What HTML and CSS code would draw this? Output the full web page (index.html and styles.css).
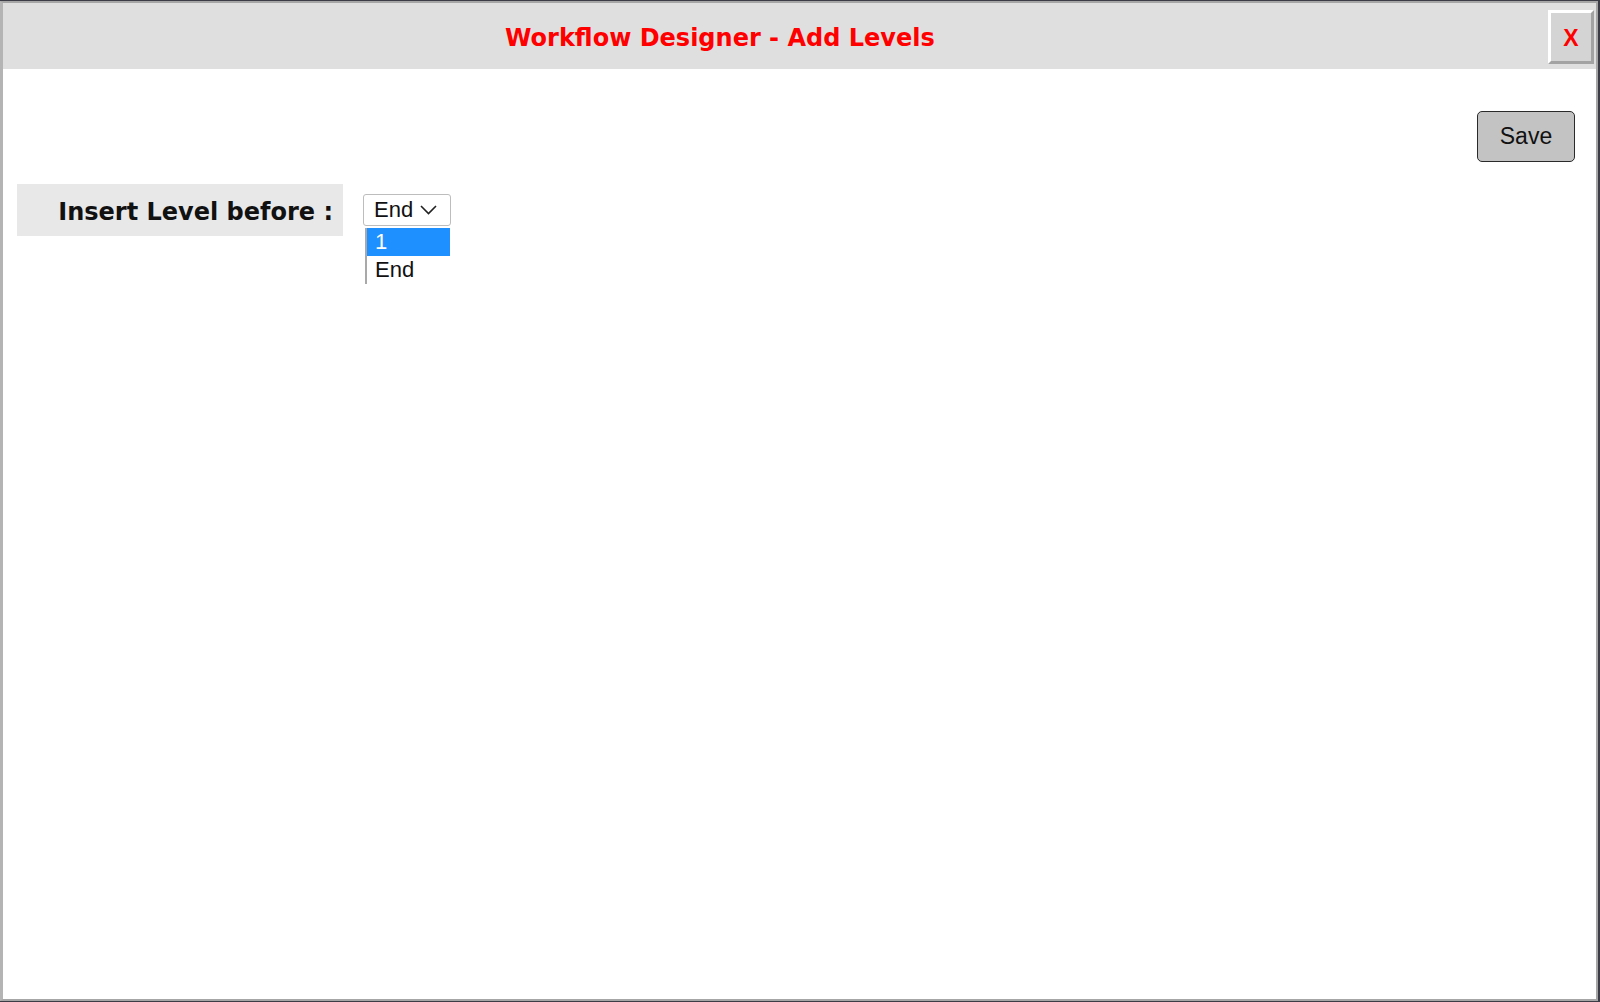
FILE: index.html
```html
<!DOCTYPE html>
<html lang="en">
<head>
  <meta charset="UTF-8" />
  <title>Workflow Designer - Add Levels</title>
  <link rel="stylesheet" href="styles.css">
</head>
<body>

<div class="dialog">
  <div class="dialog-header">
    <div class="dialog-title">Workflow Designer - Add Levels</div>
    <button class="close-btn" type="button">X</button>
  </div>

  <div class="dialog-body">
    <div class="toolbar">
      <button class="save-btn" type="button">Save</button>
    </div>

    <div class="form-row">
      <div class="form-label">Insert Level before :</div>
      <div class="select-wrap">
        <div class="select-box">
          <span>End</span>
          <svg class="chevron" width="17" height="10" viewBox="0 0 17 10">
            <polyline points="1,1 8.5,8.5 16,1" fill="none" stroke="#222" stroke-width="1.6" />
          </svg>
        </div>
        <div class="select-list">
          <div class="select-option selected">1</div>
          <div class="select-option">End</div>
        </div>
      </div>
    </div>
  </div>
</div>

</body>
</html>
```

FILE: styles.css
```css
body {
  margin: 0;
  padding: 0;
  background-color: #3c3c46;
  font-family: "Liberation Sans", Arial, sans-serif;
  color: #111;
}

.dialog {
  box-sizing: border-box;
  width: 1598px;
  height: 1000px;
  margin-top: 1px;
  background: white;
  border: 2px solid #a6a6a6;
  border-left: 3px solid #b4b4b4;
}

.dialog-header {
  display: flex;
  align-items: center;
  height: 66px;
  background-color: #dfdfdf;
}

.dialog-title {
  width: 90%;
  padding-top: 4px;
  text-align: center;
  font-family: "DejaVu Sans", Verdana, sans-serif;
  font-weight: bold;
  font-size: 24px;
  color: #ff0000;
}

.close-btn {
  box-sizing: border-box;
  align-self: flex-start;
  margin: 7px 2px 0 auto;
  width: 46px;
  height: 54px;
  padding: 2px 0 0;
  background-color: #d4d4d4;
  border: 3px solid;
  border-color: #ffffff #a3a3a3 #a3a3a3 #ffffff;
  font-family: "Liberation Sans", Arial, sans-serif;
  font-weight: bold;
  font-size: 23px;
  color: #ff0000;
}

.dialog-body {
  padding: 42px 21px 0 14px;
}

.toolbar {
  display: flex;
  justify-content: flex-end;
}

.save-btn {
  box-sizing: border-box;
  width: 98px;
  height: 51px;
  background-color: #c3c3c3;
  border: 1px solid #2a2a2a;
  border-radius: 5px;
  font-family: "Liberation Sans", Arial, sans-serif;
  font-size: 23px;
  color: #111;
}

.form-row {
  display: flex;
  align-items: flex-start;
  margin-top: 22px;
}

.form-label {
  box-sizing: border-box;
  width: 326px;
  height: 52px;
  line-height: 48px;
  padding: 4px 10px 0 0;
  text-align: right;
  background-color: #e8e8e8;
  font-family: "DejaVu Sans", Verdana, sans-serif;
  font-weight: bold;
  font-size: 24px;
  color: #111;
}

.select-wrap {
  position: relative;
  margin: 10px 0 0 20px;
}

.select-box {
  box-sizing: border-box;
  display: flex;
  align-items: center;
  justify-content: space-between;
  width: 88px;
  height: 32px;
  padding: 0 13px 0 10px;
  background: white;
  border: 1px solid #bdbdbd;
  border-radius: 3px;
  font-size: 22px;
}

.chevron {
  display: block;
}

.select-list {
  position: absolute;
  top: 34px;
  left: 2px;
  width: 83px;
  background: white;
  border-left: 2px solid #a9a9a9;
}

.select-option {
  height: 28px;
  line-height: 28px;
  padding-left: 8px;
  font-size: 22px;
  color: #111;
}

.select-option.selected {
  background-color: #1e90ff;
  color: white;
}
```
